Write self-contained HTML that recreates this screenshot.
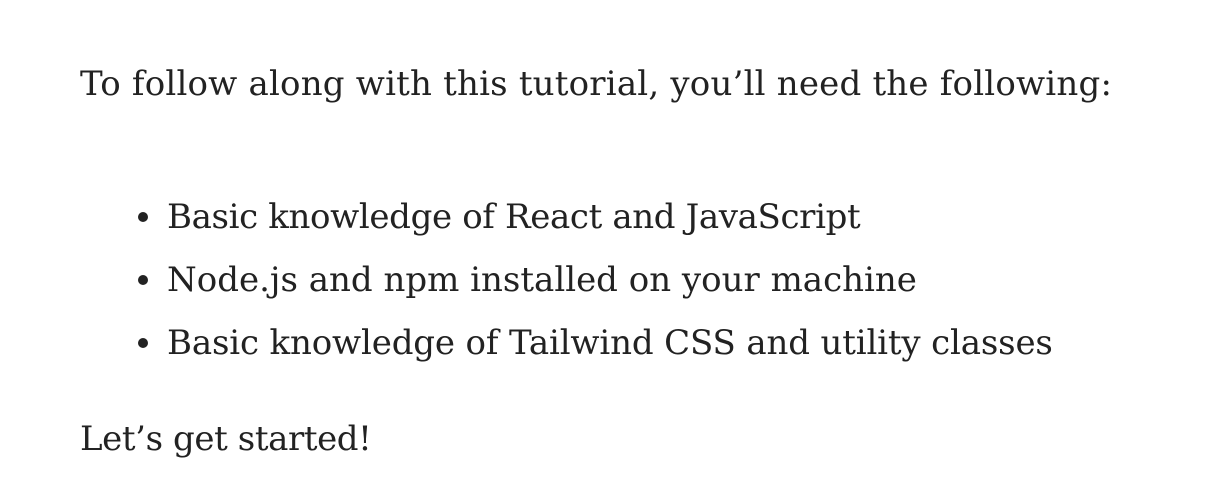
<!DOCTYPE html>
<html><head><meta charset="utf-8"><style>
html,body{margin:0;padding:0;background:#fff;width:1220px;height:494px;overflow:hidden}
body{font-family:"DejaVu Serif","Liberation Serif",serif;color:#222;font-size:34px;letter-spacing:0.2px}
.l{position:absolute;left:80px;white-space:nowrap;line-height:40px}
.b{position:absolute;left:138px;width:10px;height:10px;border-radius:50%;background:#222}
</style></head><body>
<div class="l" style="top:64px">To follow along with this tutorial, you’ll need the following:</div>
<div class="b" style="top:212px"></div><div class="l" style="left:167px;top:197px;letter-spacing:-0.36px">Basic knowledge of React and JavaScript</div>
<div class="b" style="top:275px"></div><div class="l" style="left:167px;top:260px;letter-spacing:0px">Node.js and npm installed on your machine</div>
<div class="b" style="top:338px"></div><div class="l" style="left:167px;top:323px;letter-spacing:-0.15px">Basic knowledge of Tailwind CSS and utility classes</div>
<div class="l" style="top:419px;letter-spacing:-0.4px">Let’s get started!</div>
</body></html>
